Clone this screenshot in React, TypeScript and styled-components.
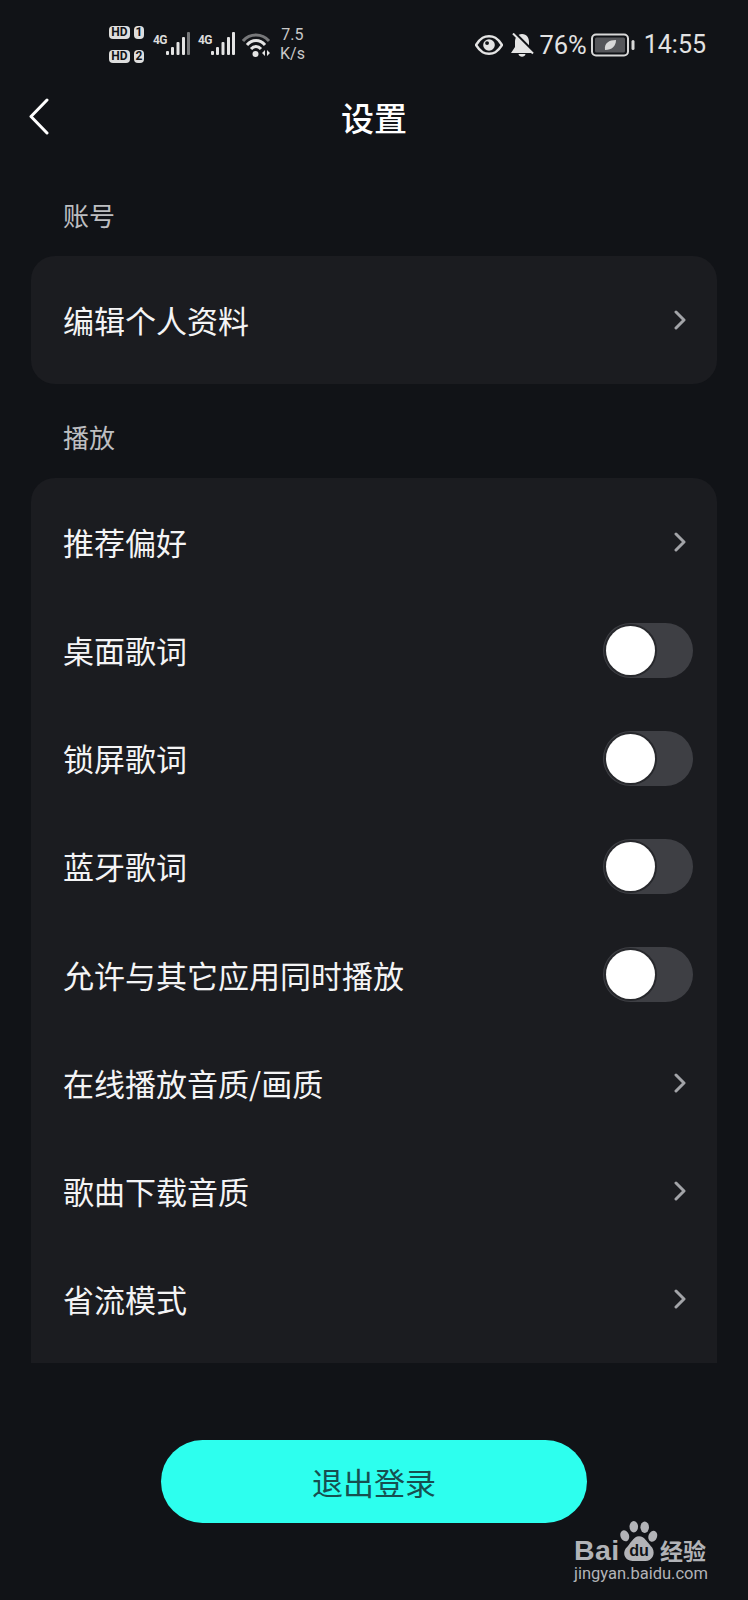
import React from 'react';
import styled, { createGlobalStyle } from 'styled-components';

const GlobalStyle = createGlobalStyle`
  html, body {
    margin: 0;
    padding: 0;
    background: #111317;
  }
  body {
    font-family: 'Noto Sans CJK SC', 'Noto Sans', sans-serif;
  }
`;

const Page = styled.div`
  position: relative;
  width: 748px;
  height: 1600px;
  overflow: hidden;
  display: flex;
  flex-direction: column;
  background: #111317;
  color: #fff;
`;

const StatusBar = styled.div`
  height: 88px;
  display: flex;
  align-items: center;
  padding: 0 42px 0 109px;
  justify-content: space-between;
  color: #dcdcdc;
`;

const StatusGroup = styled.div`
  display: flex;
  align-items: center;
`;

const RightStatus = styled(StatusGroup)`
  margin-top: 2px;
`;

const SimColumn = styled.div`
  display: flex;
  flex-direction: column;
  gap: 11px;
`;

const SimRow = styled.div`
  display: flex;
  gap: 4px;
`;

const Badge = styled.span<{ $w: number }>`
  width: ${(p) => p.$w}px;
  height: 13px;
  border-radius: 4px;
  background: #dedede;
  color: #111317;
  font: 700 12px/13px 'Roboto', sans-serif;
  text-align: center;
`;

const Signal = styled.div`
  display: flex;
  align-items: flex-start;
  margin-left: 9px;
  margin-top: -2px;

  & + & {
    margin-left: 7px;
  }
`;

const NetType = styled.span`
  font: 700 12px/12px 'Roboto', sans-serif;
  width: 13px;
  margin-top: 2px;
  letter-spacing: -0.6px;
`;

const Speed = styled.div`
  margin-left: 8px;
  font: 400 16px/19px 'Roboto', sans-serif;
  text-align: center;
  color: #c9c9c9;
`;

const StatusText = styled.span`
  font: 400 25.5px/30px 'Roboto', sans-serif;
  color: #e2e2e2;
`;

const Clock = styled(StatusText)`
  margin-left: 9px;
  font-size: 25px;
`;

const Header = styled.div`
  height: 62px;
  box-sizing: border-box;
  padding-bottom: 4px;
  position: relative;
  display: flex;
  align-items: center;
  justify-content: center;
`;

const BackIcon = styled.svg`
  position: absolute;
  left: 28px;
  top: 10px;
`;

const Title = styled.h1`
  margin: 0;
  font-size: 33px;
  font-weight: 500;
  line-height: 40px;
  color: #fff;
`;

const Main = styled.div`
  padding: 50px 31px 0;
  display: flex;
  flex-direction: column;
`;

const SectionLabel = styled.div`
  height: 30px;
  margin: 0 0 26px 32px;
  font-size: 26px;
  line-height: 30px;
  color: #bdbec1;
`;

const Card = styled.div`
  background: #1b1c20;
  border-radius: 24px;
  margin-bottom: 38px;
  height: 128px;
  display: flex;
  flex-direction: column;
  justify-content: center;
`;

const OpenCard = styled(Card)`
  border-radius: 24px 24px 0 0;
  margin-bottom: 0;
  height: 885px;
  justify-content: flex-start;
  padding-top: 10px;
  box-sizing: border-box;
`;

const Row = styled.div`
  height: 108.15px;
  flex: none;
  display: flex;
  align-items: center;
  justify-content: space-between;
  padding: 0 24px 0 32px;
`;

const RowText = styled.span`
  font-size: 31px;
  line-height: 40px;
  color: #f4f4f5;
`;

const Chevron = styled.svg`
  margin-right: 7px;
`;

const Toggle = styled.div`
  width: 90px;
  height: 55px;
  border-radius: 28px;
  background: #3e3f44;
  position: relative;
`;

const Knob = styled.div`
  position: absolute;
  left: 3px;
  top: 3px;
  width: 49px;
  height: 49px;
  border-radius: 50%;
  background: #fff;
  box-shadow: 0 0 0 2px #27282c;
`;

const LogoutButton = styled.button`
  align-self: center;
  margin-top: 77px;
  width: 426px;
  height: 83px;
  border: none;
  border-radius: 42px;
  background: #2dffee;
  color: #174f50;
  font-family: inherit;
  font-size: 31px;
  font-weight: 400;
  line-height: 40px;
`;

const Watermark = styled.div`
  position: absolute;
  left: 574px;
  top: 1520px;
  width: 136px;
  color: #b2b3b7;
`;

const WatermarkLogo = styled.div`
  display: flex;
  align-items: flex-end;
  height: 42px;
`;

const WatermarkBai = styled.span`
  font: 700 28.5px/28px 'Liberation Sans', sans-serif;
  width: 46px;
  letter-spacing: 0.4px;
  margin-bottom: -2px;
`;

const WatermarkCn = styled.span`
  font-size: 23px;
  font-weight: 700;
  line-height: 28px;
  margin-left: 2px;
  margin-bottom: -2px;
  white-space: nowrap;
`;

const WatermarkUrl = styled.div`
  font: 400 16.5px/22px 'Roboto', sans-serif;
  white-space: nowrap;
  margin-top: 1px;
`;

const Bars = ({ dimLast }: { dimLast?: boolean }) => (
  <svg width="25" height="23" viewBox="0 0 25 23">
    <rect x="0" y="19" width="3" height="4" rx="1" fill="#e4e4e4" />
    <rect x="5" y="15" width="3" height="8" rx="1" fill="#e4e4e4" />
    <rect x="10.5" y="10" width="3" height="13" rx="1" fill="#e4e4e4" />
    <rect x="16" y="5" width="3" height="18" rx="1" fill="#e4e4e4" />
    <rect x="21" y="0" width="3" height="23" rx="1" fill={dimLast ? '#77787a' : '#e4e4e4'} />
  </svg>
);

const Wifi = () => (
  <svg width="30" height="26" viewBox="0 0 30 26" style={{ marginLeft: 6, marginTop: 2 }}>
    <path d="M1 9 C8 1 20 1 27 9" fill="none" stroke="#77787a" strokeWidth="3" />
    <path d="M5 13 C10 7 18 7 23 13" fill="none" stroke="#e4e4e4" strokeWidth="3" />
    <path d="M9 17 C12 13.500 16 13.500 19 17" fill="none" stroke="#e4e4e4" strokeWidth="3" />
    <circle cx="13.500" cy="22" r="3" fill="#e4e4e4" />
    <path d="M20 21 L23 18 V24 Z M25 18 L28 21 L25 24 Z" fill="#e4e4e4" />
  </svg>
);

const Eye = () => (
  <svg width="28" height="20" viewBox="0 0 29 20" style={{ marginRight: 7 }}>
    <path
      d="M1 10 C6 2 10 1 14.500 1 C19 1 23 2 28 10 C23 18 19 19 14.500 19 C10 19 6 18 1 10 Z"
      fill="none"
      stroke="#e4e4e4"
      strokeWidth="2.500"
    />
    <circle cx="14.500" cy="10" r="6" fill="#e4e4e4" />
    <circle cx="12.500" cy="8" r="2" fill="#111317" />
  </svg>
);

const Bell = () => (
  <svg width="24" height="24" viewBox="0 0 24 24" style={{ marginRight: 5 }}>
    <path d="M12 1 C17 1 19 5 19 9 V14 L23 20 H1 L5 14 V9 C5 5 7 1 12 1 Z" fill="#e4e4e4" />
    <path d="M8.500 21 H15.500 C15 24.500 9 24.500 8.500 21 Z" fill="#e4e4e4" />
    <path d="M5 0 L24 19" stroke="#111317" strokeWidth="2.500" />
    <path d="M3 0.500 L23 20.500" stroke="#e4e4e4" strokeWidth="2" />
  </svg>
);

const Battery = () => (
  <svg width="44" height="24" viewBox="0 0 44 24" style={{ marginLeft: 4 }}>
    <rect x="1" y="1.500" width="36" height="21" rx="4" fill="none" stroke="#d8d8d8" strokeWidth="2" />
    <rect x="4" y="4.500" width="30" height="15" rx="1.500" fill="#55565a" />
    <path d="M14 17 C13 10 18 7 25 7 C25 13 21 17 14 17 Z" fill="#d8d8d8" />
    <rect x="40.500" y="7" width="3" height="10" rx="1.500" fill="#d8d8d8" />
  </svg>
);

const RowChevron = () => (
  <Chevron width="12" height="20" viewBox="0 0 12 20">
    <path d="M2 2 L10 10 L2 18" fill="none" stroke="#a3a4a8" strokeWidth="3" strokeLinecap="round" strokeLinejoin="round" />
  </Chevron>
);

const Paw = () => (
  <svg width="38" height="42" viewBox="0 0 40 44">
    <ellipse cx="14.500" cy="7" rx="4.500" ry="6" fill="#b2b3b7" />
    <ellipse cx="26" cy="7.500" rx="4.500" ry="6" fill="#b2b3b7" />
    <ellipse cx="5" cy="16.500" rx="4.500" ry="6" fill="#b2b3b7" transform="rotate(-20 5 16.500)" />
    <ellipse cx="34.500" cy="17" rx="4.500" ry="6" fill="#b2b3b7" transform="rotate(20 34.500 17)" />
    <path d="M20 17 C26 17 29 24 34 29 C38 36 33 43 27 43 H13 C6 43 2 36 6 30 C11 25 14 17 20 17 Z" fill="#b2b3b7" />
    <text x="20" y="38" textAnchor="middle" fontFamily="Liberation Sans" fontWeight="700" fontSize="17" fill="#111317">
      du
    </text>
  </svg>
);

type Item = { label: string; kind: 'link' | 'toggle' };

const playItems: Item[] = [
  { label: '推荐偏好', kind: 'link' },
  { label: '桌面歌词', kind: 'toggle' },
  { label: '锁屏歌词', kind: 'toggle' },
  { label: '蓝牙歌词', kind: 'toggle' },
  { label: '允许与其它应用同时播放', kind: 'toggle' },
  { label: '在线播放音质/画质', kind: 'link' },
  { label: '歌曲下载音质', kind: 'link' },
  { label: '省流模式', kind: 'link' },
];

const App = () => (
  <Page lang="zh-CN">
    <GlobalStyle />
    <StatusBar>
      <StatusGroup>
        <SimColumn>
          <SimRow>
            <Badge $w={21}>HD</Badge>
            <Badge $w={10}>1</Badge>
          </SimRow>
          <SimRow>
            <Badge $w={21}>HD</Badge>
            <Badge $w={10}>2</Badge>
          </SimRow>
        </SimColumn>
        <Signal>
          <NetType>4G</NetType>
          <Bars dimLast />
        </Signal>
        <Signal>
          <NetType>4G</NetType>
          <Bars />
        </Signal>
        <Wifi />
        <Speed>
          7.5
          <br />
          K/s
        </Speed>
      </StatusGroup>
      <RightStatus>
        <Eye />
        <Bell />
        <StatusText>76%</StatusText>
        <Battery />
        <Clock>14:55</Clock>
      </RightStatus>
    </StatusBar>

    <Header>
      <BackIcon width="22" height="37" viewBox="0 0 22 37">
        <path d="M19 2 L3 18.500 L19 35" fill="none" stroke="#fff" strokeWidth="3" strokeLinecap="round" strokeLinejoin="round" />
      </BackIcon>
      <Title>设置</Title>
    </Header>

    <Main>
      <SectionLabel>账号</SectionLabel>
      <Card>
        <Row>
          <RowText>编辑个人资料</RowText>
          <RowChevron />
        </Row>
      </Card>
      <SectionLabel>播放</SectionLabel>
      <OpenCard>
        {playItems.map((item) => (
          <Row key={item.label}>
            <RowText>{item.label}</RowText>
            {item.kind === 'link' ? (
              <RowChevron />
            ) : (
              <Toggle>
                <Knob />
              </Toggle>
            )}
          </Row>
        ))}
      </OpenCard>
      <LogoutButton>退出登录</LogoutButton>
    </Main>

    <Watermark>
      <WatermarkLogo>
        <WatermarkBai>Bai</WatermarkBai>
        <Paw />
        <WatermarkCn>经验</WatermarkCn>
      </WatermarkLogo>
      <WatermarkUrl>jingyan.baidu.com</WatermarkUrl>
    </Watermark>
  </Page>
);

export default App;
